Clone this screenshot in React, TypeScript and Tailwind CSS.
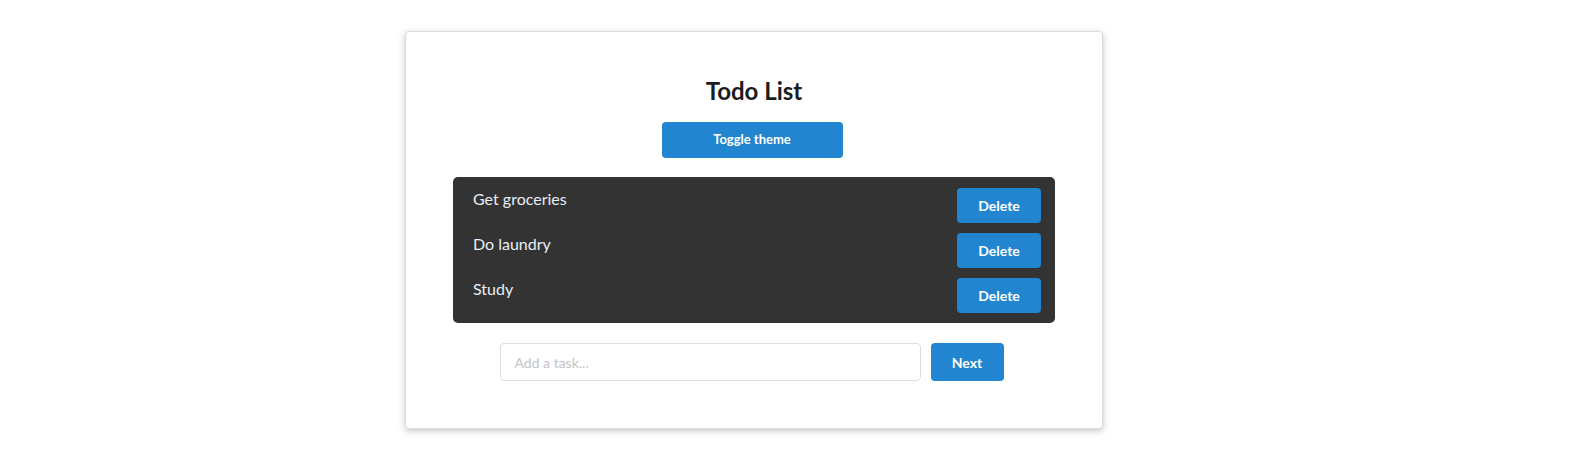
import { useState } from 'react';

const todosInit = ['Get groceries', 'Do laundry', 'Study'];

export default function App() {
  const [todos, setTodos] = useState(todosInit);
  const [task, setTask] = useState('');

  const addTask = () => {
    if (!task.trim()) return;
    setTodos([...todos, task.trim()]);
    setTask('');
  };

  return (
    <div className="min-h-[471px] bg-white pt-[31px] font-['Lato',_'Liberation_Sans',_sans-serif]">
      <div className="ml-[405px] flex h-[398px] w-[698px] flex-col items-center rounded border border-[#dcdcdd] bg-white shadow-[0_2px_4px_0_rgba(34,36,38,0.12),0_2px_10px_0_rgba(34,36,38,0.15)]">
        <h1 className="mt-[44px] text-[24px] leading-[30px] font-bold text-[#1b1c1d]">Todo List</h1>

        <button className="mt-[16px] ml-[-4px] h-[36px] w-[181px] rounded bg-[#2185d0] text-[13px] font-bold text-white">
          Toggle theme
        </button>

        {/* list */}
        <ul className="mt-[19px] flex w-[602px] flex-col gap-[10px] rounded-[5px] bg-[#333333] pt-[11px] pr-[14px] pb-[10px] pl-[20px]">
          {todos.map((t, i) => (
            <li key={i} className="flex h-[35px] items-start justify-between">
              <span className="pt-[1px] text-[16px] leading-[20px] text-[#e8eef5]">{t}</span>
              <button
                onClick={() => setTodos(todos.filter((_, j) => j !== i))}
                className="h-[35px] w-[84px] rounded bg-[#2185d0] text-[14px] font-bold text-white"
              >
                Delete
              </button>
            </li>
          ))}
        </ul>

        <div className="mt-[20px] ml-[-5px] flex gap-[10px]">
          <input
            value={task}
            onChange={(e) => setTask(e.target.value)}
            placeholder="Add a task..."
            className="h-[38px] w-[421px] rounded border border-[#dededf] px-[14px] text-[14px] text-[#333] outline-none placeholder:text-[#c4c4c4]"
          />
          <button onClick={addTask} className="h-[38px] w-[73px] rounded bg-[#2185d0] text-[14px] font-bold text-white">
            Next
          </button>
        </div>
      </div>
    </div>
  );
}
